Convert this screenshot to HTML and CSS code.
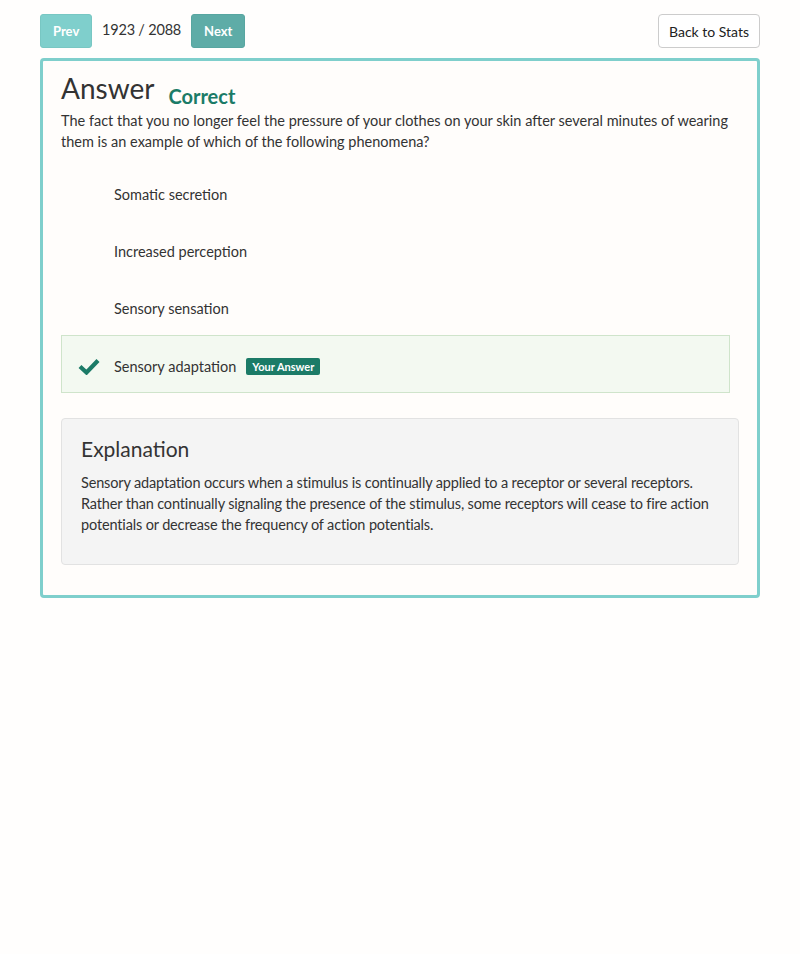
FILE: index.html
```html
<!DOCTYPE html>
<html>
<head>
<meta charset="utf-8">
<link rel="stylesheet" href="styles.css">
</head>
<body>
<div class="page">
  <div class="topbar">
    <div class="nav">
      <button class="btn btn-prev">Prev</button>
      <span class="counter">1923 / 2088</span>
      <button class="btn btn-next">Next</button>
    </div>
    <button class="btn-back">Back to Stats</button>
  </div>
  <div class="card">
    <div class="title-row">
      <h1 class="title">Answer</h1>
      <span class="status">Correct</span>
    </div>
    <p class="question">The fact that you no longer feel the pressure of your clothes on your skin after several minutes of wearing them is an example of which of the following phenomena?</p>
    <div class="options">
      <div class="option"><span class="mark"></span><span class="label">Somatic secretion</span></div>
      <div class="option"><span class="mark"></span><span class="label">Increased perception</span></div>
      <div class="option"><span class="mark"></span><span class="label">Sensory sensation</span></div>
      <div class="option option-selected">
        <span class="mark"><svg width="22" height="17" viewBox="0 0 22 17"><path d="M2 8.5 L8.5 14.5 L20 2.5" fill="none" stroke="#1b7b67" stroke-width="4.2" stroke-linecap="butt" stroke-linejoin="miter"/></svg></span>
        <span class="label">Sensory adaptation</span>
        <span class="badge">Your Answer</span>
      </div>
    </div>
    <div class="explanation">
      <h2 class="exp-title">Explanation</h2>
      <p class="exp-text">Sensory adaptation occurs when a stimulus is continually applied to a receptor or several receptors. Rather than continually signaling the presence of the stimulus, some receptors will cease to fire action potentials or decrease the frequency of action potentials.</p>
    </div>
  </div>
</div>
</body>
</html>
```
FILE: styles.css
```css
html, body {
  margin: 0;
  padding: 0;
  background: #fffefd;
}
body {
  font-family: "Lato", "Open Sans", sans-serif;
  color: #333;
}
.page {
  width: 720px;
  margin: 0 auto;
  padding-top: 14px;
}
.topbar {
  display: flex;
  justify-content: space-between;
  align-items: center;
}
.nav {
  display: flex;
  align-items: center;
}
.btn {
  font-family: inherit;
  height: 34px;
  border: 1px solid transparent;
  border-radius: 3px;
  color: #fff;
  font-weight: 700;
  font-size: 13px;
  padding: 0 12px;
}
.btn-prev {
  background: #7fcfcc;
  border-color: #78c7c3;
  width: 52px;
}
.btn-next {
  background: #5eaca7;
  border-color: #58a6a1;
  width: 54px;
}
.counter {
  font-size: 14.5px;
  letter-spacing: -0.2px;
  color: #333;
  margin: 0 10px 0 10px;
  position: relative;
  top: -2px;
}
.btn-back {
  font-family: inherit;
  height: 34px;
  width: 102px;
  background: #fff;
  border: 1px solid #ccc;
  border-radius: 4px;
  font-size: 14px;
  color: #222;
  padding: 0;
}
.card {
  margin-top: 10px;
  border: 3px solid #7fcfcc;
  border-radius: 4px;
  background: #fffdfb;
  padding: 9px 18px 30px 18px;
}
.title-row {
  display: flex;
  align-items: baseline;
}
.title {
  font-size: 28px;
  font-weight: 400;
  margin: 0;
  line-height: 36px;
  color: #333;
}
.status {
  font-size: 20px;
  font-weight: 700;
  color: #1b7b67;
  margin-left: 14px;
  position: relative;
  top: 5px;
}
.question {
  font-size: 14.5px;
  line-height: 21px;
  margin: 4px 0 0 0;
}
.options {
  margin-top: 14px;
  margin-right: 9px;
}
.option {
  box-sizing: border-box;
  display: flex;
  align-items: center;
  height: 57px;
  padding-left: 16px;
  font-size: 14.5px;
  border: 1px solid transparent;
}
.option-selected {
  background: #f3f9f1;
  border-color: #cfe4cb;
  height: 58px;
  margin-top: -2px;
  padding-top: 4px;
}
.mark {
  width: 36px;
  display: flex;
  align-items: center;
}
.label {
  color: #333;
}
.badge {
  background: #1b7b67;
  color: #fff;
  font-size: 11px;
  font-weight: 700;
  border-radius: 2px;
  padding: 2px 6px;
  margin-left: 10px;
}
.explanation {
  margin-top: 25px;
  background: #f4f4f4;
  border: 1px solid #e2e2e2;
  border-radius: 4px;
  padding: 16px 19px 29px 19px;
}
.exp-title {
  font-size: 21px;
  font-weight: 400;
  margin: 0 0 9px 0;
  line-height: 28px;
  color: #333;
}
.exp-text {
  font-size: 14.5px;
  letter-spacing: -0.15px;
  line-height: 21px;
  margin: 0;
}
```
